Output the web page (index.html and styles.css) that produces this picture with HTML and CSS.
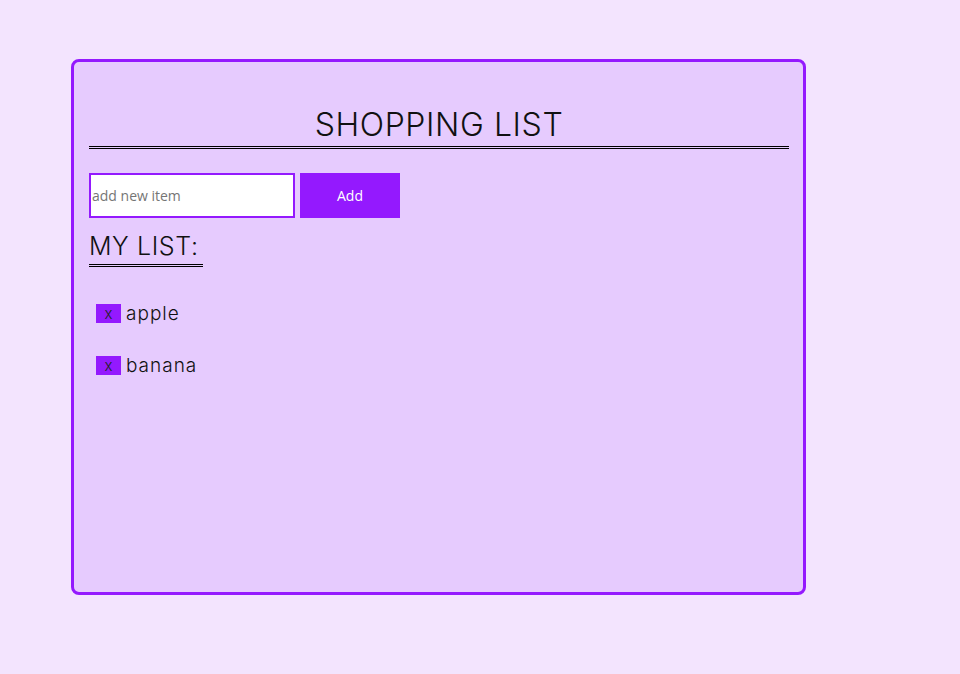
FILE: index.html
```html
<!DOCTYPE html>
<html>
<head>
<meta charset="utf-8">
<link rel="stylesheet" href="styles.css">
</head>
<body>
<main class="card">
  <h1 class="title">SHOPPING LIST</h1>
  <form class="add-form">
    <input class="add-input" type="text" placeholder="add new item">
    <button class="add-btn" type="button">Add</button>
  </form>
  <h2 class="subtitle">MY LIST:</h2>
  <ul class="list">
    <li class="item"><button class="del" type="button">x</button><span class="label">apple</span></li>
    <li class="item"><button class="del" type="button">x</button><span class="label">banana</span></li>
  </ul>
</main>
</body>
</html>
```
FILE: styles.css
```css
* { box-sizing: border-box; }
html, body { margin: 0; padding: 0; }
body {
  background: #f3e4fe;
  padding: 59px 0 0 71px;
  font-family: Inter, "Liberation Sans", sans-serif;
  color: #111;
}
.card {
  width: 735px;
  height: 536px;
  background: #e6cbfe;
  border: 3px solid #9419fe;
  border-radius: 8px;
  padding: 0 14px 0 15px;
}
.title {
  margin: 0;
  padding-top: 43px;
  font-weight: 300;
  font-size: 32px;
  line-height: 40px;
  letter-spacing: 0.6px;
  text-align: center;
  border-bottom: 3px double #000;
  padding-bottom: 1px;
}
.add-form {
  display: flex;
  gap: 5px;
  margin-top: 24px;
}
.add-input {
  width: 206px;
  height: 45px;
  border: 2px solid #9419fe;
  background: #fff;
  padding: 0 1px;
  font-family: "Open Sans", "DejaVu Sans", sans-serif;
  font-size: 14px;
  color: #333;
  outline: none;
}
.add-input::placeholder { color: #757575; }
.add-btn {
  width: 100px;
  height: 45px;
  border: none;
  background: #9419fe;
  color: #fff;
  font-family: "Open Sans", "DejaVu Sans", sans-serif;
  font-size: 14px;
}
.subtitle {
  display: inline-block;
  margin: 10px 0 0 0;
  font-weight: 300;
  font-size: 25px;
  line-height: 36px;
  letter-spacing: 0.6px;
  border-bottom: 3px double #000;
  padding-right: 4px;
}
.list {
  list-style: none;
  margin: 26px 0 0 0;
  padding: 0 0 0 7px;
}
.item {
  display: flex;
  align-items: center;
  gap: 5px;
  height: 40px;
  margin-bottom: 12px;
}
.del {
  width: 25px;
  height: 19px;
  border: none;
  background: #9419fe;
  color: #222;
  font-family: Inter, sans-serif;
  font-weight: 300;
  font-size: 15px;
  padding: 0;
  line-height: 19px;
}
.label {
  font-weight: 300;
  font-size: 19px;
  letter-spacing: 1px;
}
```
